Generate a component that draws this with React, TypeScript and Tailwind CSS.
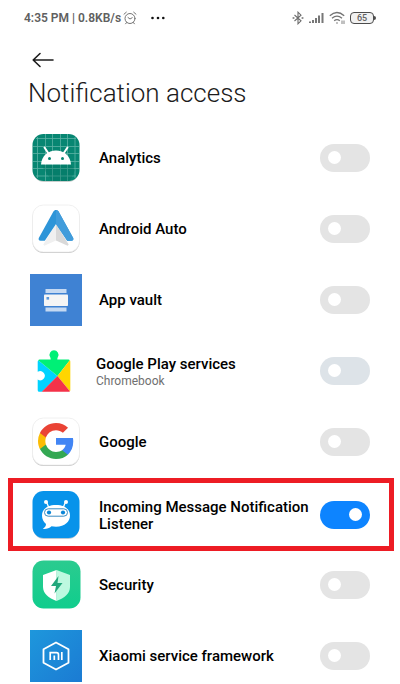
import React, { useState } from "react";

function AnalyticsIcon() {
  return (
    <svg width="48" height="50" viewBox="0 0 48 50" aria-hidden="true">
      <rect x="1" y="2" width="46" height="47" rx="11" fill="#c9cfcd" />
      <rect x="0.500" y="1" width="47" height="47" rx="11" fill="#078672" />
      <path
        d="M5.5 4v41M13.5 1v47M20.5 1v47M28.5 1v47M35.5 1v47M43 4v41M4 5.5h40M1 13.5h46M1 20.5h46M1 28.5h46M1 35.5h46M4 43h40"
        stroke="#5cb3a4"
        strokeWidth="0.8"
        fill="none"
      />
      <path d="M9 32h30l4 5-5 11H20z" fill="#04705f" opacity="0.35" />
      <path d="M9 31.5C9.500 23 16 17.500 24 17.500S38.500 23 39 31.500z" fill="#fff" />
      <path d="M12.500 14.500l4 6M35.500 14.500l-4 6" stroke="#fff" strokeWidth="2" strokeLinecap="round" />
      <circle cx="17.500" cy="25.500" r="1.500" fill="#078672" />
      <circle cx="30.500" cy="25.500" r="1.500" fill="#078672" />
    </svg>
  );
}

function WhiteTile() {
  return (
    <>
      <rect x="0.500" y="2" width="47" height="47" rx="11" fill="#c4c4c4" />
      <rect x="0.500" y="1" width="47" height="47" rx="11" fill="#fff" stroke="#ececec" strokeWidth="0.800" />
    </>
  );
}

function AndroidAutoIcon() {
  return (
    <svg width="48" height="50" viewBox="0 0 48 50" aria-hidden="true">
      <WhiteTile />
      <path d="M24 20L11.300 40.500l1 1.300L24 36.500z" fill="#f0f0f0" />
      <path d="M24 20l12.700 20.500-1 1.300L24 36.500z" fill="#d9d9d9" />
      <path d="M24 6c1.200 0 2 .6 2.600 1.600L41.200 34c.6 1.400-.2 2.800-1.800 2.800h-4.200L24 20 12.800 36.800H8.600c-1.600 0-2.400-1.400-1.800-2.800L21.400 7.600C22 6.600 22.800 6 24 6z" fill="#2e95d8" />
      <path d="M24 6c1.200 0 2 .6 2.600 1.600L41.200 34c.6 1.400-.2 2.800-1.800 2.800h-4.200L24 20z" fill="#419cdb" />
    </svg>
  );
}

function AppVaultIcon() {
  return (
    <svg width="52" height="52" viewBox="0 0 52 52" aria-hidden="true">
      <rect width="52" height="52" fill="#3f82d3" />
      <rect x="15.500" y="15" width="21" height="4" fill="#c5d9f2" />
      <rect x="14" y="20.500" width="24" height="11.500" rx="0.800" fill="#f5f5f5" />
      <rect x="16.500" y="23" width="2.600" height="2.600" fill="#5a97db" />
      <rect x="15.500" y="33.500" width="21" height="4" fill="#c5d9f2" />
    </svg>
  );
}

function PlayServicesIcon() {
  return (
    <svg width="34" height="44" viewBox="0 0 34 44" aria-hidden="true">
      <path d="M1.200 11.200L20.500 27 5 42.800H2.300Q.7 42.800 .7 41.200V30.600A4.600 4.600 0 1 0 .7 22.800V12.500z" fill="#00d3ff" />
      <path d="M1.200 11.200q.5-.6 1.300-.6h11.200Q13.700 9 13 7.800a4.500 4.500 0 1 1 8 0Q20.300 9 20.300 10.600h11.200q.8 0 1.300.6L20.500 27z" fill="#00f076" />
      <path d="M32.800 11.200q.5.500.5 1.300v28.700q0 .7-.4 1.100L20.500 27z" fill="#ffd500" />
      <path d="M20.500 27l12.400 15.300q-.5.500-1.300.5H4.800z" fill="#f43249" />
    </svg>
  );
}

function GoogleIcon() {
  return (
    <svg width="48" height="50" viewBox="0 0 48 50" aria-hidden="true">
      <WhiteTile />
      <g transform="translate(6 6) scale(1.500)">
        <path fill="#4285f4" d="M23.500 12.270c0-.79-.07-1.540-.19-2.270H12v4.510h6.470c-.29 1.480-1.140 2.730-2.400 3.580v3h3.860c2.260-2.090 3.570-5.170 3.570-8.820z" />
        <path fill="#34a853" d="M12 24c3.240 0 5.950-1.080 7.930-2.910l-3.860-3c-1.080.72-2.450 1.160-4.070 1.160-3.130 0-5.780-2.110-6.730-4.960H1.290v3.090C3.260 21.300 7.310 24 12 24z" />
        <path fill="#fbbc05" d="M5.270 14.290c-.25-.72-.38-1.490-.38-2.290s.14-1.570.38-2.290V6.620H1.290A11.860 11.860 0 0 0 0 12c0 1.940.47 3.770 1.290 5.380z" />
        <path fill="#ea4335" d="M12 4.750c1.770 0 3.350.61 4.600 1.800l3.420-3.420C17.950 1.190 15.240 0 12 0 7.310 0 3.260 2.700 1.290 6.620l3.980 3.090C6.220 6.860 8.870 4.750 12 4.750z" />
      </g>
    </svg>
  );
}

function BotIcon() {
  return (
    <svg width="48" height="50" viewBox="0 0 48 50" aria-hidden="true">
      <rect x="1" y="2" width="46" height="47" rx="11" fill="#b9c9d3" />
      <rect x="0.500" y="1" width="47" height="47" rx="11" fill="#0893ea" />
      <path d="M14.500 12l2.500 6M33.500 12l-2.500 6" stroke="#fff" strokeWidth="1.300" />
      <circle cx="14" cy="12" r="2" fill="#fff" />
      <circle cx="34" cy="12" r="2" fill="#fff" />
      <path d="M10 25.500c0-6 5-10.500 14-10.500s14 4.500 14 10.500-5 11.200-14 11.200c-1.600 0-3.200-.2-4.500-.5-2.200 2-5 3-8.700 2.700 2-1.200 3.200-2.800 3.200-4.800C11.500 32 10 29 10 25.500z" fill="#fff" />
      <rect x="12.500" y="18.800" width="23" height="7.400" rx="3.700" fill="#fff" stroke="#3a8cc2" strokeWidth="1" />
      <circle cx="17" cy="22.500" r="2.100" fill="#0b86d8" />
      <circle cx="31" cy="22.500" r="2.100" fill="#0b86d8" />
    </svg>
  );
}

function SecurityIcon() {
  return (
    <svg width="49" height="49" viewBox="0 0 49 49" aria-hidden="true">
      <defs>
        <linearGradient id="securityTile" x1="0" y1="0" x2="0" y2="1">
          <stop offset="0" stopColor="#2bcb8f" />
          <stop offset="1" stopColor="#10cd8d" />
        </linearGradient>
      </defs>
      <rect x="0.500" y="0.500" width="48" height="48" rx="11" fill="url(#securityTile)" />
      <path d="M24.500 10l13.500 5v12c0 6.500-5.500 11-13.500 14z" fill="#bdf9e0" />
      <path d="M24.500 10L11 15v12c0 6.500 5.500 11 13.500 14z" fill="#fff" />
      <path d="M26.500 16l-7.500 10h5l-1.500 7.500 8-10.500h-5z" fill="#22a77c" />
    </svg>
  );
}

function MiIcon() {
  return (
    <svg width="52" height="52" viewBox="0 0 52 52" aria-hidden="true">
      <defs>
        <linearGradient id="miTile" x1="0" y1="0" x2="1" y2="1">
          <stop offset="0" stopColor="#1e97dc" />
          <stop offset="1" stopColor="#1b7bd3" />
        </linearGradient>
      </defs>
      <rect width="52" height="52" fill="url(#miTile)" />
      <path d="M26 12.500l12.500 6.800v13.400L26 39.500l-12.500-6.800V19.300z" fill="none" stroke="#fff" strokeWidth="1.800" strokeLinejoin="round" />
      <path d="M20.200 30v-7.300h6.300q2 0 2 2V30M24.300 25.500V30M31.800 22V30" fill="none" stroke="#fff" strokeWidth="1.700" />
    </svg>
  );
}

function StatusBar() {
  return (
    <header className="flex h-9 shrink-0 items-center justify-between px-6 text-[#606060]">
      <div className="flex items-center">
        <span className="text-xs font-semibold">4:35 PM | 0.8KB/s</span>
        <svg className="ml-0.5" width="14" height="14" viewBox="0 0 14 14" fill="none" stroke="#747474" strokeLinecap="round" aria-hidden="true">
          <circle cx="7" cy="7.500" r="5" />
          <path d="M1 3.200L3.300 1.200M13 3.200L10.700 1.200M5 6.500l2 1.500 2.200-1.300M3.600 11.500l-1 1.300M10.400 11.500l1 1.300" />
        </svg>
        <svg className="ml-3.5" width="14" height="4" viewBox="0 0 14 4" fill="#111" aria-hidden="true">
          <circle cx="1.500" cy="2" r="1.300" />
          <circle cx="7" cy="2" r="1.300" />
          <circle cx="12.300" cy="2" r="1.300" />
        </svg>
      </div>
      <div className="flex items-center gap-1">
        <svg width="12" height="14" viewBox="0 0 12 14" fill="none" stroke="#6c6c6c" strokeWidth="1.100" aria-hidden="true">
          <path d="M2.500 4l6.500 5.800L6 12.800V1.200L9 4.200 2.500 10" />
          <path d="M.6 7h1.800M9.600 7h1.800" strokeWidth="1.400" />
        </svg>
        <svg width="17" height="14" viewBox="0 0 17 14" fill="#777" aria-hidden="true">
          <rect x="1" y="10.500" width="2" height="1.500" />
          <rect x="4" y="9" width="2" height="3" />
          <rect x="7" y="7" width="2" height="5" />
          <rect x="10" y="4.500" width="2" height="7.500" />
          <rect x="13.500" y="2" width="2" height="10" />
        </svg>
        <svg width="17" height="14" viewBox="0 0 17 14" fill="none" stroke="#747474" strokeWidth="1.300" aria-hidden="true">
          <path d="M.8 4.800q7-6.600 14.400 0M3 7.300q5-4.400 10 0M5.200 9.800q2.800-2.400 5.600 0" />
          <circle cx="8" cy="12" r="0.800" fill="#747474" stroke="none" />
          <path d="M13 9.500v3.500M15 9.500v3.500" strokeWidth="0.900" />
        </svg>
        <div className="flex items-center">
          <span className="flex h-3 w-6 items-center justify-center rounded border border-[#4c4c4c] bg-[#f1f1f1] text-[9px] leading-none font-medium">65</span>
          <span className="h-1 w-0.5 rounded-r bg-[#4c4c4c]" />
        </div>
      </div>
    </header>
  );
}

type AppEntry = {
  id: string;
  name: string;
  detail?: string;
  Icon: () => React.JSX.Element;
  enabled?: boolean;
};

const apps: AppEntry[] = [
  { id: "analytics", name: "Analytics", Icon: AnalyticsIcon },
  { id: "android-auto", name: "Android Auto", Icon: AndroidAutoIcon },
  { id: "app-vault", name: "App vault", Icon: AppVaultIcon },
  { id: "play-services", name: "Google Play services", detail: "Chromebook", Icon: PlayServicesIcon },
  { id: "google", name: "Google", Icon: GoogleIcon },
  { id: "listener", name: "Incoming Message Notification Listener", Icon: BotIcon, enabled: true },
  { id: "security", name: "Security", Icon: SecurityIcon },
  { id: "xiaomi", name: "Xiaomi service framework", Icon: MiIcon },
];

function AppRow({ app }: { app: AppEntry }) {
  const [on, setOn] = useState(Boolean(app.enabled));
  const { Icon } = app;
  return (
    <li
      className={
        app.enabled
          ? "mx-2 mr-1.5 mt-px -mb-0.5 flex h-[73px] items-center border-[5px] border-[#ed1c24] pl-[15px] pr-[19px]"
          : "flex h-[71px] items-center pl-7 pr-[30px]"
      }
    >
      <span className={app.detail ? "flex w-[52px] shrink-0 justify-center" : "flex w-14 shrink-0 justify-center"}>
        <Icon />
      </span>
      <label htmlFor={app.id} className={app.detail ? "ml-4 min-w-0 flex-1 pt-1" : "ml-[15px] min-w-0 flex-1 pt-0.5"}>
        <span className="block text-[15px] leading-[17px] font-medium text-black">{app.name}</span>
        {app.detail && <span className="block text-xs leading-[17px] text-[#707070]">{app.detail}</span>}
      </label>
      <input
        id={app.id}
        type="checkbox"
        checked={on}
        onChange={() => setOn(!on)}
        className={
          (app.detail ? "bg-[#dde3e8]" : "bg-[#e4e4e4]") +
          " flex h-7 w-[50px] shrink-0 appearance-none items-center rounded-full px-2 before:size-[13px] before:rounded-full before:bg-white before:content-[''] checked:justify-end checked:bg-[#0d84ff]"
        }
      />
    </li>
  );
}

export default function App() {
  return (
    <main className="flex h-screen flex-col overflow-hidden bg-white font-[Roboto,sans-serif]">
      <StatusBar />
      <button type="button" aria-label="Back" className="ml-8 mt-3 flex h-6 w-6 shrink-0 items-center">
        <svg width="22" height="16" viewBox="0 0 22 16" fill="none" stroke="#1c1c1c" strokeWidth="1.600" strokeLinecap="round" strokeLinejoin="round" aria-hidden="true">
          <path d="M8 1.500L1.200 8 8 14.500M1.200 8H21" />
        </svg>
      </button>
      <h1 className="ml-7 mt-[5px] h-[45px] shrink-0 text-[26px] leading-8 font-light text-[#1c1c1c]">Notification access</h1>
      <ul className="shrink-0">
        {apps.map((app) => (
          <AppRow key={app.id} app={app} />
        ))}
      </ul>
    </main>
  );
}
